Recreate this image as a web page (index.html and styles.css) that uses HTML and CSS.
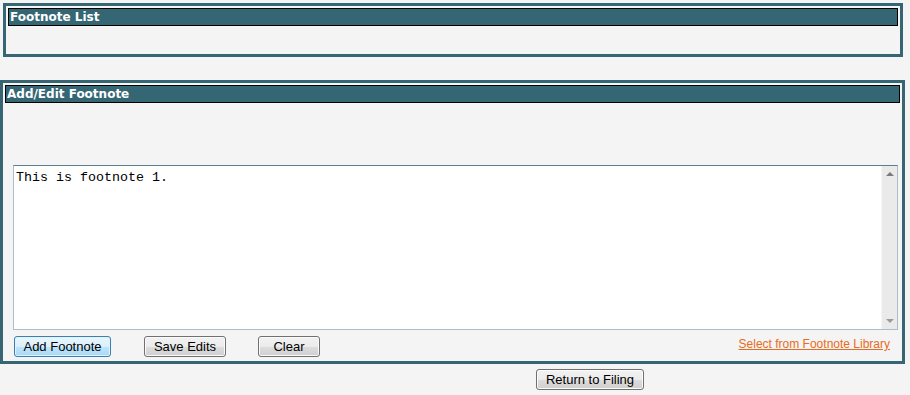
FILE: index.html
```html
<!DOCTYPE html>
<html>
<head>
    <title>Footnotes</title>
    <link rel="stylesheet" href="styles.css">
</head>
<body>
    <div class="panel panel-list">
        <div class="panel-header">Footnote List</div>
        <div class="list-body"></div>
    </div>

    <div class="panel panel-edit">
        <div class="panel-header">Add/Edit Footnote</div>
        <div class="edit-body">
            <div class="text-box">
                <textarea id="footnoteText" spellcheck="false">This is footnote 1.</textarea>
                <div class="scrollbar">
                    <span class="arrow arrow-up"></span>
                    <span class="arrow arrow-down"></span>
                </div>
            </div>
            <div class="button-row">
                <button class="btn btn-focus">Add Footnote</button>
                <button class="btn btn-save">Save Edits</button>
                <button class="btn btn-clear">Clear</button>
                <a href="#" class="library-link">Select from Footnote Library</a>
            </div>
        </div>
    </div>

    <div class="return-row">
        <button class="btn btn-return">Return to Filing</button>
    </div>
</body>
</html>
```

FILE: styles.css
```css
body {
    margin: 0;
    padding: 3px 0 0 0;
    background: #f4f4f4;
    font-family: "Liberation Sans", Arial, sans-serif;
    width: 910px;
    height: 395px;
    overflow: hidden;
}

.panel {
    border: 3px solid #366573;
    padding: 2px;
    box-sizing: border-box;
}

.panel-list {
    margin-left: 3px;
    width: 900px;
    height: 54px;
}

.panel-edit {
    margin-top: 23px;
    width: 905px;
    height: 284px;
}

.panel-header {
    height: 18px;
    box-sizing: border-box;
    background: #356673;
    border: 1px solid #000;
    color: #ffffff;
    font-family: "DejaVu Sans", Verdana, sans-serif;
    font-weight: bold;
    font-size: 12px;
    line-height: 16px;
    padding-left: 1px;
}

.edit-body {
    padding: 62px 2px 0 8px;
}

.text-box {
    display: flex;
    height: 165px;
    width: 885px;
    box-sizing: border-box;
    border: 1px solid #abbdcc;
    border-top-color: #5d7f8c;
    background: #ffffff;
}

.text-box textarea {
    flex: 1;
    border: none;
    outline: none;
    resize: none;
    margin: 0;
    padding: 4px 2px;
    font-family: "Liberation Mono", "Courier New", monospace;
    font-size: 13.33px;
    line-height: 15px;
    color: #000;
    background: #ffffff;
    overflow: hidden;
}

.scrollbar {
    width: 15px;
    background: #eaeaea;
    border-left: 1px solid #f6f6f6;
    display: flex;
    flex-direction: column;
    justify-content: space-between;
    align-items: center;
    padding: 6px 0;
}

.arrow {
    width: 0;
    height: 0;
    border-left: 4px solid transparent;
    border-right: 4px solid transparent;
}

.arrow-up {
    border-bottom: 4px solid #7a7a7a;
}

.arrow-down {
    border-top: 4px solid #9a9a9a;
}

.button-row {
    display: flex;
    align-items: flex-start;
    margin-top: 6px;
    padding-left: 1px;
    width: 876px;
}

.btn {
    height: 21px;
    padding: 0;
    font-family: "Liberation Sans", Arial, sans-serif;
    font-size: 13px;
    color: #000;
    border: 1px solid #707070;
    border-radius: 3px;
    background: linear-gradient(#f2f2f2 0%, #ebebeb 50%, #dddddd 51%, #cfcfcf 100%);
    box-shadow: inset 0 0 0 1px #fbfbfb;
}

.btn-focus {
    width: 97px;
    border-color: #3c7fb1;
    background: linear-gradient(#eaf6fd 0%, #d9f0fc 50%, #bee6fd 51%, #a7d9f5 100%);
    box-shadow: inset 0 0 0 1px #e2f2fb;
}

.btn-save {
    width: 82px;
    margin-left: 33px;
}

.btn-clear {
    width: 62px;
    margin-left: 32px;
}

.library-link {
    margin-left: auto;
    margin-top: 1px;
    font-size: 12px;
    line-height: 14px;
    color: #e86c1c;
}

.return-row {
    padding: 5px 0 0 536px;
}

.btn-return {
    width: 108px;
}
```
